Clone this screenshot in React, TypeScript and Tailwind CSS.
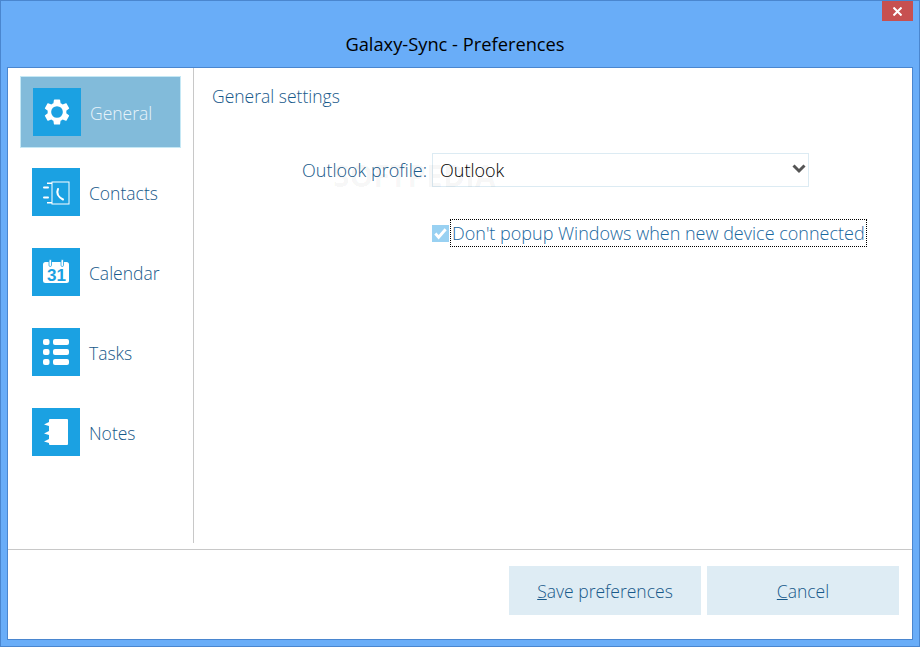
import { useState } from "react";

const sans = "font-['Open_Sans',sans-serif]";

function GearIcon() {
  return (
    <svg viewBox="0 0 48 48" className="h-12 w-12" fill="white">
      <g transform="translate(8.4 8.4) scale(1.3)">
        <path
          fillRule="evenodd"
          d="M19.14 12.94c.04-.3.06-.61.06-.94 0-.32-.02-.64-.07-.94l2.03-1.58c.18-.14.23-.41.12-.61l-1.92-3.32c-.12-.22-.37-.29-.59-.22l-2.39.96c-.5-.38-1.03-.7-1.62-.94l-.36-2.54c-.04-.24-.24-.41-.48-.41h-3.84c-.24 0-.43.17-.47.41l-.36 2.54c-.59.24-1.13.57-1.62.94l-2.39-.96c-.22-.08-.47 0-.59.22L2.74 8.87c-.12.21-.08.47.12.61l2.03 1.58c-.05.3-.09.63-.09.94s.02.64.07.94l-2.03 1.58c-.18.14-.23.41-.12.61l1.92 3.32c.12.22.37.29.59.22l2.39-.96c.5.38 1.03.7 1.62.94l.36 2.54c.05.24.24.41.48.41h3.84c.24 0 .44-.17.47-.41l.36-2.54c.59-.24 1.13-.56 1.62-.94l2.39.96c.22.08.47 0 .59-.22l1.92-3.32c.12-.22.07-.47-.12-.61l-2.01-1.58zM12 16.500a4.500 4.500 0 1 1 0-9 4.500 4.500 0 0 1 0 9z"
        />
      </g>
    </svg>
  );
}

function ContactsIcon() {
  return (
    <svg viewBox="0 0 48 48" className="h-12 w-12" fill="white">
      <rect x="20" y="14" width="17" height="22" fill="none" stroke="white" />
      <rect x="15" y="14.5" width="5" height="1.500" />
      <rect x="11" y="18.5" width="6" height="2" rx="1" />
      <rect x="11" y="28.5" width="6" height="2" rx="1" />
      <rect x="15" y="34" width="5" height="1.500" />
      <path d="M26 21c-1.500 3.500-.5 7.500 5 10.500" fill="none" stroke="white" strokeWidth="2" strokeLinecap="round" />
    </svg>
  );
}

function CalendarIcon() {
  return (
    <svg viewBox="0 0 48 48" className="h-12 w-12">
      <rect x="11" y="14" width="26" height="21" rx="2.5" fill="white" />
      <rect x="17" y="11.5" width="2.500" height="7" rx="1.250" fill="white" stroke="#1ba1e2" strokeWidth="0.8" />
      <rect x="29" y="11.5" width="2.500" height="7" rx="1.250" fill="white" stroke="#1ba1e2" strokeWidth="0.8" />
      <text x="24.5" y="33" textAnchor="middle" fontSize="17" fontWeight="700" fill="#1ba1e2" fontFamily="Liberation Sans, sans-serif">
        31
      </text>
    </svg>
  );
}

function TasksIcon() {
  return (
    <svg viewBox="0 0 48 48" className="h-12 w-12" fill="white">
      <rect x="11" y="11" width="6.5" height="6" rx="2" />
      <rect x="11" y="21" width="6.5" height="6" rx="2" />
      <rect x="11" y="31" width="6.5" height="6" rx="2" />
      <rect x="21" y="11" width="16" height="6" rx="2" />
      <rect x="21" y="21" width="16" height="6" rx="2" />
      <rect x="21" y="31" width="16" height="6" rx="2" />
    </svg>
  );
}

function NotesIcon() {
  return (
    <svg viewBox="0 0 48 48" className="h-12 w-12" fill="white">
      <rect x="17" y="11" width="19" height="26" rx="1" />
      <path d="M12 16.500l5-2.500v4zM12 25.500l5-2.500v4zM12 33.500l5-2.500v4z" />
    </svg>
  );
}

const items = [
  { name: "General", icon: <GearIcon /> },
  { name: "Contacts", icon: <ContactsIcon /> },
  { name: "Calendar", icon: <CalendarIcon /> },
  { name: "Tasks", icon: <TasksIcon /> },
  { name: "Notes", icon: <NotesIcon /> },
];

export default function App() {
  const [active, setActive] = useState("General");
  const [noPopup, setNoPopup] = useState(true);

  return (
    <div className={`${sans} flex h-[647px] w-[920px] flex-col border border-[#4a86cf] bg-[#69adf8] font-light`}>
      {/* TITLE BAR */}
      <div className="relative flex h-[66px] shrink-0 items-end justify-center pb-[11px] pr-[10px]">
        <span className="text-[18.3px] font-normal leading-6 text-black">Galaxy-Sync - Preferences</span>
        <button className="absolute right-[6px] top-0 flex h-5 w-[31px] items-center justify-center bg-[#c75050]">
          <svg viewBox="0 0 9 9" className="h-[9px] w-[9px]" stroke="white" strokeWidth="2">
            <path d="M.5.5l8 8M8.5.5l-8 8" />
          </svg>
        </button>
      </div>

      {/* PANEL */}
      <div className="mx-[6px] mb-[6px] flex flex-1 flex-col border border-[#4a86cf] bg-white">
        <div className="mb-[6px] flex h-[475px]">
          {/* SIDEBAR */}
          <div className="flex w-[186px] shrink-0 flex-col gap-2 border-r border-[#c8c8c8] pl-3 pt-2">
            {items.map((item) => (
              <div
                key={item.name}
                onClick={() => setActive(item.name)}
                className={`flex h-[72px] w-[161px] items-center gap-[9px] pl-3 ${
                  active === item.name ? "border border-[#c5e8f5] bg-[#82bbda]" : ""
                }`}
              >
                <div className="h-12 w-12 bg-[#1ba1e2]">{item.icon}</div>
                <span className={`pt-[2px] text-[17.5px] ${active === item.name ? "text-[#e8f4fa]" : "text-[#17598a]"}`}>
                  {item.name}
                </span>
              </div>
            ))}
          </div>

          {/* GENERAL SETTINGS */}
          <div className="relative flex-1 pt-[16px]">
            <div className="pl-[18px] text-[17.5px] leading-6 text-[#17598a]">General settings</div>

            <div className="mt-[45px] flex items-center gap-[5px]">
              <label className="w-[233px] text-right text-[18px] text-[#17598a]">Outlook profile:</label>
              <div className="relative h-[34px] w-[377px]">
                <select className="h-full w-full appearance-none border border-[#dcebf3] bg-white pl-[7px] text-[18px] font-light text-black outline-none">
                  <option>Outlook</option>
                </select>
                <svg viewBox="0 0 14 10" className="pointer-events-none absolute right-[3px] top-[11px] h-[10px] w-[14px]" fill="none" stroke="#555" strokeWidth="3">
                  <path d="M1.5 1.5L7 7l5.500-5.500" />
                </svg>
              </div>
            </div>

            <div className="ml-[238px] mt-[32px] flex items-center">
              <button
                onClick={() => setNoPopup(!noPopup)}
                className="flex h-[17px] w-[17px] items-center justify-center bg-[#99d1f2]"
              >
                {noPopup && (
                  <svg viewBox="0 0 16 16" className="h-[15px] w-[15px]" fill="none" stroke="white" strokeWidth="3">
                    <path d="M2.500 8l3.500 4 7.500-8.500" />
                  </svg>
                )}
              </button>
              <span className="ml-px whitespace-nowrap border border-dotted border-black pl-px pr-px pt-px text-[18px] leading-[25px] text-[#1a68a0]">
                Don't popup Windows when new device connected
              </span>
            </div>

            {/* watermark */}
            <span className="pointer-events-none absolute left-[139px] top-[92px] text-[30px] font-bold leading-8 text-black/[0.04]">
              SOFTPEDIA
            </span>
          </div>
        </div>

        {/* FOOTER */}
        <div className="flex flex-1 justify-end gap-[6px] border-t border-[#c8c8c8] pr-[13px] pt-[16px]">
          <button className="h-[49px] w-[192px] bg-[#deecf4] pt-[2px] text-[17.5px] text-[#17598a]">
            <span className="underline">S</span>ave preferences
          </button>
          <button className="h-[49px] w-[192px] bg-[#deecf4] pt-[2px] text-[17.5px] text-[#17598a]">
            <span className="underline">C</span>ancel
          </button>
        </div>
      </div>
    </div>
  );
}
